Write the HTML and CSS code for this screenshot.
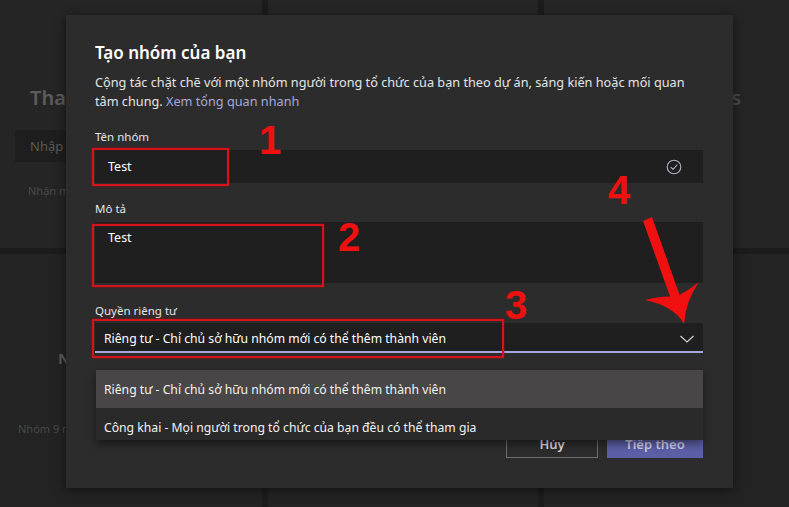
FILE: index.html
```html
<!DOCTYPE html>
<html lang="vi">
<head>
<meta charset="utf-8">
<title>Tạo nhóm của bạn</title>
<link rel="stylesheet" href="styles.css">
</head>
<body>
<div class="page">
  <div class="bg">
    <div class="card c1">
      <div class="clip">
        <div class="card-title">Tham</div>
        <div class="code-input">Nhập</div>
        <div class="card-note">Nhận mã</div>
      </div>
    </div>
    <div class="card c2"></div>
    <div class="card c3"><div class="clip-end"><span class="card-title">Teams</span></div></div>
    <div class="card c4">
      <div class="clip">
        <div class="card-title2">Nhóm</div>
        <div class="card-note2">Nhóm 9 người</div>
      </div>
    </div>
    <div class="card c5"></div>
    <div class="card c6"></div>
  </div>

  <div class="modal">
    <h2 class="modal-title">Tạo nhóm của bạn</h2>
    <p class="modal-desc">Cộng tác chặt chẽ với một nhóm người trong tổ chức của bạn theo dự án, sáng kiến hoặc mối quan tâm chung. <span class="link">Xem tổng quan nhanh</span></p>

    <div class="field-label">Tên nhóm</div>
    <div class="input">
      <span>Test</span>
      <svg class="check" width="16" height="16" viewBox="0 0 16 16"><circle cx="8" cy="8" r="6.8" fill="none" stroke="#b4b4c8" stroke-width="1.1"/><path d="M5 8.3 L7.1 10.3 L11 6" fill="none" stroke="#b4b4c8" stroke-width="1.1" stroke-linecap="round" stroke-linejoin="round"/></svg>
    </div>

    <div class="field-label">Mô tả</div>
    <div class="textarea">Test</div>

    <div class="field-label privacy">Quyền riêng tư</div>
    <div class="select">
      <span>Riêng tư - Chỉ chủ sở hữu nhóm mới có thể thêm thành viên</span>
      <svg class="chev" width="16" height="10" viewBox="0 0 16 10"><path d="M1.5 2 L8 8 L14.5 2" fill="none" stroke="#d0d0d0" stroke-width="1.2"/></svg>
    </div>

    <div class="actions">
      <div class="btn btn-outline">Hủy</div>
      <div class="btn btn-primary">Tiếp theo</div>
    </div>

    <div class="menu">
      <div class="menu-item active">Riêng tư - Chỉ chủ sở hữu nhóm mới có thể thêm thành viên</div>
      <div class="menu-item second">Công khai - Mọi người trong tổ chức của bạn đều có thể tham gia</div>
    </div>
  </div>

  <div class="mark box1"></div>
  <div class="mark box2"></div>
  <div class="mark box3"></div>
  <div class="num n1">1</div>
  <div class="num n2">2</div>
  <div class="num n3">3</div>
  <div class="num n4">4</div>
  <svg class="arrow" width="80" height="120" viewBox="630 210 80 120">
    <polygon points="643,221 652,217 681,299 672,302" fill="#f01010"/>
    <path d="M684,324 Q674,306 645,300 Q664,295 676,297 Q688,291 699,282 Q686,300 684,324 Z" fill="#f01010"/>
  </svg>
</div>
</body>
</html>
```
FILE: styles.css
```css
* { box-sizing: border-box; }
html, body { margin: 0; padding: 0; }
body {
  width: 789px;
  height: 507px;
  overflow: hidden;
  background: #1c1c1c;
  font-family: "Noto Sans", "Open Sans", sans-serif;
  color: #fff;
}
.page {
  position: relative;
  width: 789px;
  height: 507px;
}

/* background page (mostly hidden behind the dialog) */
.bg {
  display: grid;
  grid-template-columns: 262px 270px 1fr;
  grid-template-rows: 248px 1fr;
  column-gap: 6px;
  row-gap: 6px;
  height: 507px;
}
.card {
  background: #252525;
  padding: 84px 0 0 15px;
}
.clip {
  width: 51px;
  overflow: hidden;
  white-space: nowrap;
}
.clip-end {
  width: 8px;
  margin-left: 174px;
  overflow: hidden;
  white-space: nowrap;
  display: flex;
  justify-content: flex-end;
}
.card-title {
  font-size: 20px;
  line-height: 28px;
  font-weight: 600;
  color: #5c5c5c;
  padding-left: 15px;
  white-space: nowrap;
}
.clip-end .card-title { padding-left: 0; flex: none; color: #4a4a4a; }
.code-input {
  margin-top: 18px;
  height: 32px;
  width: 200px;
  background: #1e1e1e;
  color: #5a5a5a;
  font-size: 13px;
  line-height: 32px;
  padding-left: 15px;
}
.card-note {
  margin-top: 21px;
  font-size: 11px;
  color: #4a4a4a;
  padding-left: 13px;
}
.c4 { padding-top: 94px; background: #232323; }
.c5, .c6 { background: #232323; }
.card-title2 {
  font-size: 15px;
  font-weight: 700;
  color: #5a5a5a;
  padding-left: 43px;
}
.card-note2 {
  margin-top: 53px;
  font-size: 11px;
  color: #4a4a4a;
  padding-left: 3px;
}

/* modal */
.modal {
  position: absolute;
  left: 66px;
  top: 15px;
  width: 667px;
  height: 473px;
  background: #2d2c2c;
  box-shadow: 0 2px 10px rgba(0,0,0,.5);
  padding: 26px 30px 0 29px;
}
.modal-title {
  margin: 0;
  font-size: 17px;
  line-height: 24px;
  font-weight: 600;
}
.modal-desc {
  margin: 8px 0 0 0;
  font-size: 12.7px;
  line-height: 19px;
  color: #e4e4e4;
}
.link { color: #a6a7dc; }
.field-label {
  margin-top: 18px;
  font-size: 11.5px;
  line-height: 16px;
  color: #e6e6e6;
}
.field-label.privacy { margin-top: 20px; }
.input {
  margin-top: 5px;
  height: 33px;
  background: #1f1f1f;
  display: flex;
  align-items: center;
  justify-content: space-between;
  padding: 0 21px 0 13px;
  font-size: 12.5px;
}
.textarea {
  margin-top: 5px;
  height: 61px;
  background: #1f1f1f;
  padding: 8px 13px;
  font-size: 12.5px;
  line-height: 16px;
}
.select {
  margin-top: 4px;
  height: 30px;
  background: #1f1f1f;
  border-bottom: 2px solid #a6a7dc;
  display: flex;
  align-items: center;
  justify-content: space-between;
  padding: 3px 8px 0 9px;
  font-size: 12.2px;
}
.chev { margin-top: 1px; }
.actions {
  margin-top: 80px;
  display: flex;
  justify-content: flex-end;
  gap: 9px;
}
.btn {
  height: 25px;
  font-size: 13px;
  font-weight: 600;
  display: flex;
  align-items: center;
  justify-content: center;
  padding-bottom: 3px;
}
.btn-outline {
  width: 92px;
  border: 1px solid #6f6e6e;
  color: #d8d8d8;
}
.btn-primary {
  width: 96px;
  background: #5c5fa6;
  color: #cfd0ea;
}

/* dropdown menu */
.menu {
  position: absolute;
  left: 30px;
  top: 355px;
  width: 607px;
  background: #2b2a2a;
  box-shadow: 0 4px 8px rgba(0,0,0,.45);
}
.menu-item {
  display: flex;
  align-items: center;
  padding-left: 8px;
  font-size: 12.2px;
  color: #f2f2f2;
}
.menu-item.active {
  height: 38px;
  background: #484646;
}
.menu-item.second {
  height: 32px;
  padding-top: 6px;
}

/* annotations */
.mark {
  position: absolute;
  border: 2px solid #d4141c;
  box-shadow: 0 0 2px rgba(210,0,0,.7), inset 0 0 1px rgba(210,0,0,.6);
}
.box1 { left: 92px; top: 148px; width: 137px; height: 38px; }
.box2 { left: 92px; top: 224px; width: 232px; height: 63px; }
.box3 { left: 92px; top: 319px; width: 412px; height: 39px; }
.num {
  position: absolute;
  font-family: "Liberation Sans", Arial, sans-serif;
  font-weight: 700;
  font-size: 40px;
  line-height: 40px;
  color: #f01010;
}
.n1 { left: 259px; top: 120px; }
.n2 { left: 338px; top: 217px; }
.n3 { left: 505px; top: 285px; }
.n4 { left: 608px; top: 170px; }
.arrow {
  position: absolute;
  left: 630px;
  top: 210px;
}
```
